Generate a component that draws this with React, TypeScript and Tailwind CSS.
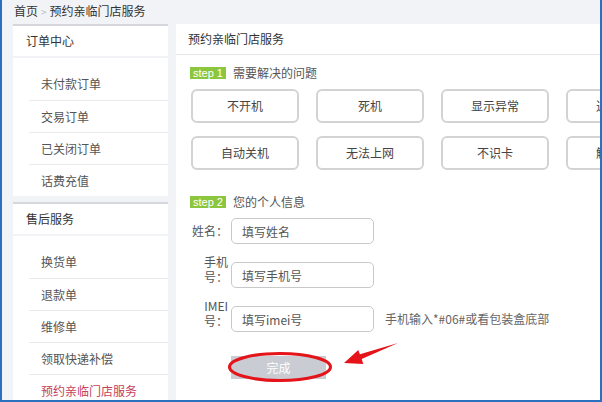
import React from 'react';

const orderItems = ['未付款订单', '交易订单', '已关闭订单', '话费充值'];
const serviceItems = ['换货单', '退款单', '维修单', '领取快递补偿', '预约亲临门店服务'];
const problemRows = [
    ['不开机', '死机', '显示异常', '通话异常'],
    ['自动关机', '无法上网', '不识卡', '触屏失灵'],
];

const SideGroup: React.FC<{ title: string; items: string[]; active?: string; className?: string }> = ({ title, items, active, className }) => (
    <div className={className}>
        <div className="h-[32px] bg-white border-t-2 border-[#d5d7dc] flex items-center pl-[13px] text-[#333]">{title}</div>
        <div className="bg-white mt-[2px] pt-[10px] pl-[16px]">
            {items.map((it, i) => (
                <div
                    key={it}
                    className={`h-[32px] flex items-center pl-[12px] ${i > 0 ? 'border-t border-[#e9eaee]' : ''} ${it === active ? 'text-[#c5405c]' : 'text-[#555]'}`}
                >
                    {it}
                </div>
            ))}
        </div>
    </div>
);

const StepBadge: React.FC<{ n: number; label: string }> = ({ n, label }) => (
    <div className="flex items-center gap-[7px] h-[12px]">
        <span className="bg-[#8cc63e] text-white text-[11px] leading-[12px] h-[12px] px-[3px] font-['Liberation_Sans',sans-serif]">step {n}</span>
        <span className="text-[#555]">{label}</span>
    </div>
);

const FieldRow: React.FC<{ label: React.ReactNode; placeholder: string; twoLine?: boolean; hint?: string }> = ({ label, placeholder, twoLine, hint }) => (
    <div className={`flex ${twoLine ? 'items-start' : 'items-center'}`}>
        <div className={`w-[38px] mr-[3px] text-right text-[#555] ${twoLine ? '-mt-[8px] leading-[15px]' : ''}`}>{label}</div>
        <input
            className="w-[143px] h-[26px] border border-[#c9c9c9] rounded-[5px] px-[10px] text-[12px] text-[#555] placeholder:text-[#555] outline-none bg-white"
            placeholder={placeholder}
        />
        {hint && <span className="ml-[11px] self-center text-[#666]">{hint}</span>}
    </div>
);

export default function App() {
    return (
        <div className="relative w-[602px] h-[402px] overflow-hidden bg-[#f2f3f7] text-[12px] font-['Noto_Sans_CJK_SC','Microsoft_YaHei',sans-serif]">
            <div className="h-[24px] flex items-center pb-[2px] pl-[14px] gap-[3px] text-[#333]">
                <span>首页</span>
                <span className="text-[#bbb] text-[10px]">&gt;</span>
                <span>预约亲临门店服务</span>
            </div>

            <div className="flex pl-[13px] h-[378px]">
                <div className="w-[155px] shrink-0 flex flex-col">
                    <SideGroup title="订单中心" items={orderItems} />
                    <SideGroup title="售后服务" items={serviceItems} active="预约亲临门店服务" className="mt-[6px]" />
                </div>

                <div className="w-[426px] shrink-0 ml-[8px] flex flex-col">
                    <div className="h-[31px] bg-white border-b border-[#e6e7eb] flex items-center pl-[12px] text-[#333]">预约亲临门店服务</div>
                    <div className="flex-1 bg-white pl-[14px] pt-[12px]">
                        <StepBadge n={1} label="需要解决的问题" />
                        <div className="mt-[10px] flex flex-col gap-[13px] pl-[1px]">
                            {problemRows.map((row, r) => (
                                <div key={r} className="flex gap-[17px]">
                                    {row.map(p => (
                                        <div key={p} className="w-[108px] h-[34px] shrink-0 border-2 border-[#d3d3d3] rounded-[6px] bg-white flex items-center justify-center text-[#444]">
                                            {p}
                                        </div>
                                    ))}
                                </div>
                            ))}
                        </div>

                        <div className="mt-[26px]">
                            <StepBadge n={2} label="您的个人信息" />
                        </div>
                        <div className="mt-[10px] flex flex-col gap-[18px]">
                            <FieldRow label="姓名：" placeholder="填写姓名" />
                            <FieldRow label={<>手机<br />号：</>} placeholder="填写手机号" twoLine />
                            <FieldRow label={<>IMEI<br />号：</>} placeholder="填写imei号" twoLine hint="手机输入*#06#或看包装盒底部" />
                        </div>
                        <div className="mt-[24px] ml-[41px]">
                            <button className="w-[95px] h-[23px] bg-[#c9ccd3] text-white text-[12px]">完成</button>
                        </div>
                    </div>
                </div>
            </div>

            <svg className="absolute inset-0 pointer-events-none" width="602" height="402" viewBox="0 0 602 402">
                <ellipse cx="280" cy="367" rx="50.5" ry="13.5" fill="none" stroke="#e5141b" strokeWidth="3" />
                <polygon points="344,363 358.3,350.1 359.9,354.3 398,343 361.7,358.9 363.3,364 " fill="#e5141b" />
            </svg>

            <div className="absolute inset-0 border-x-2 border-b-2 border-[#2a6fc0] pointer-events-none" />
        </div>
    );
}
